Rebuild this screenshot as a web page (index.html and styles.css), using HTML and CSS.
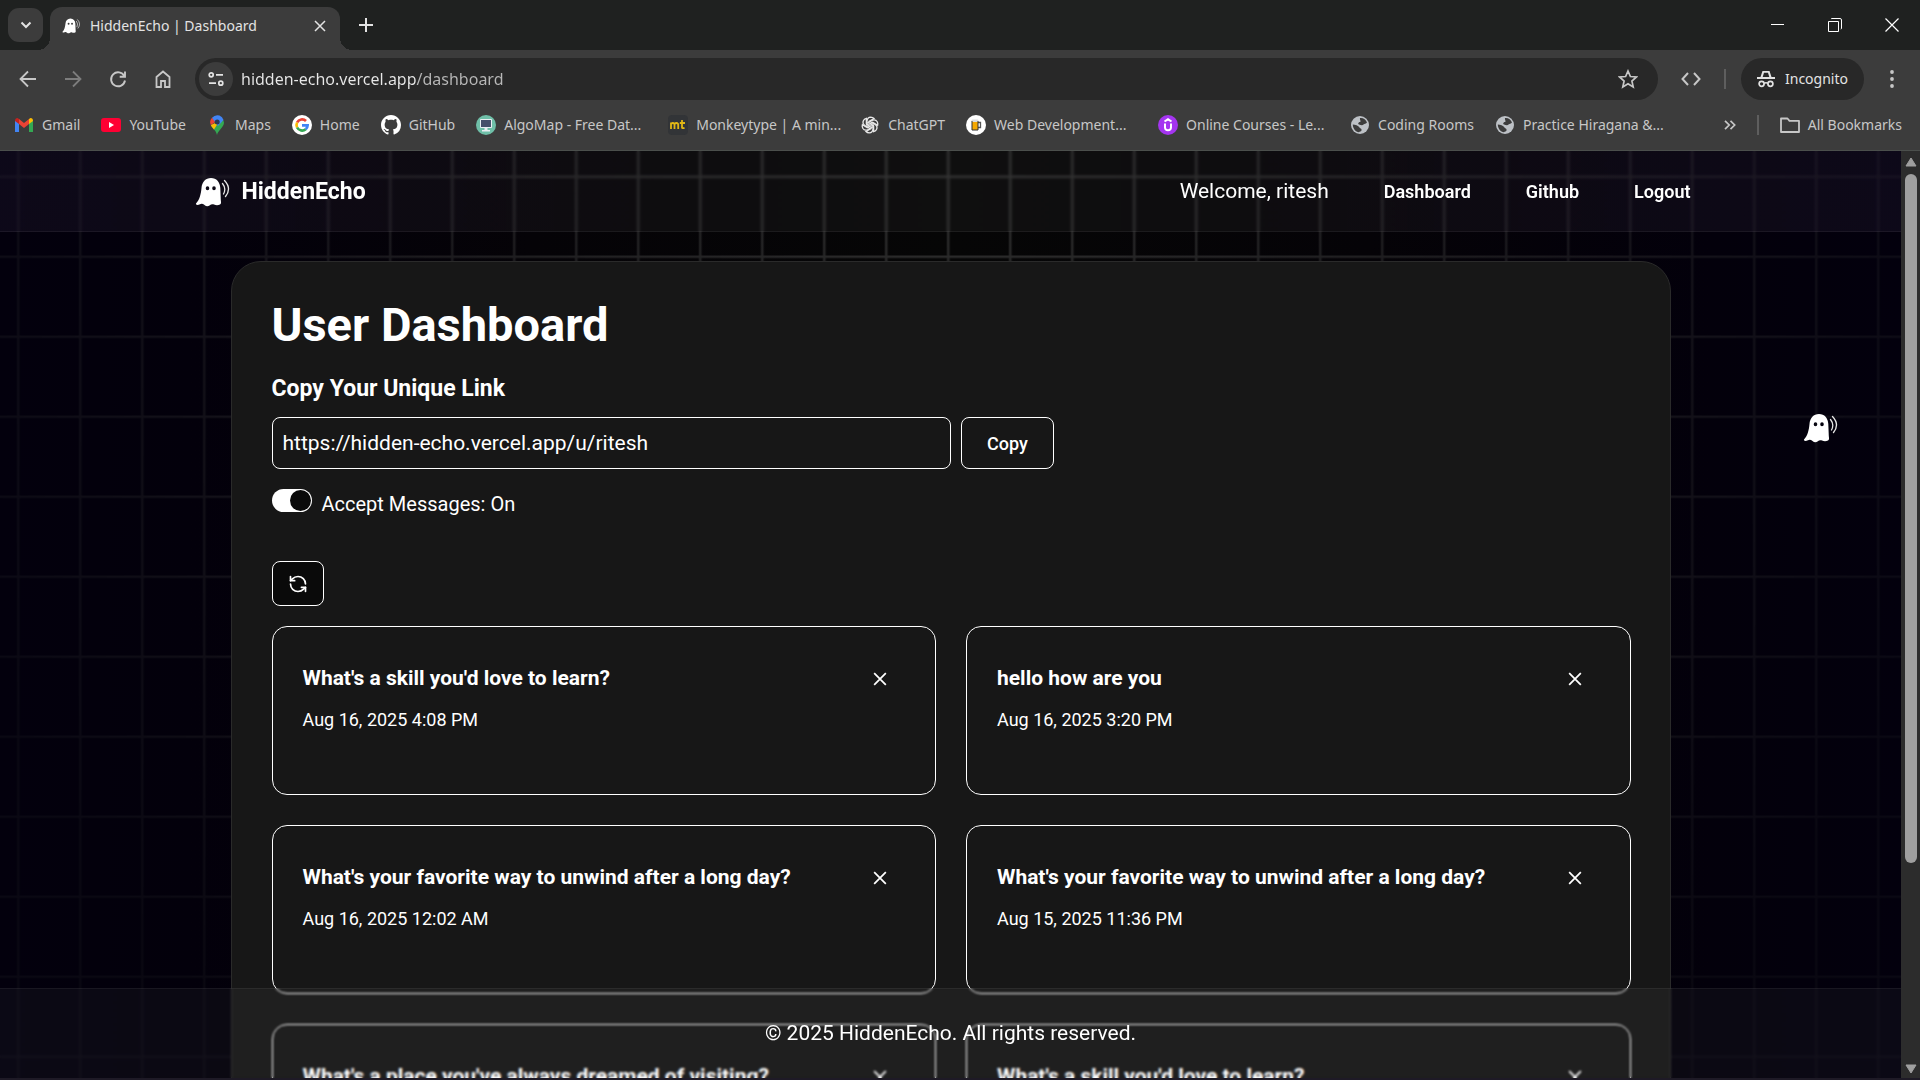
FILE: index.html
```html
<!DOCTYPE html>
<html lang="en">
<head>
<meta charset="utf-8">
<meta name="viewport" content="width=device-width, initial-scale=1">
<title>HiddenEcho | Dashboard</title>
<link rel="stylesheet" href="styles.css">
</head>
<body>
<svg class="defs" aria-hidden="true">
  <symbol id="ghost" viewBox="4 6 36 31">
    <path fill="#fff" fill-rule="evenodd" d="M20 8C14.500 8 11 12 10.500 18C10 24 8.500 30 5 33.500C4.500 35 6.500 35.500 9 34.300C10.500 33.300 12 33.800 13.500 35C15 36.500 17 36.800 18.500 35.500C20 34.300 21.500 33.800 23 34.600C25 35.600 27 35.600 29 34.600C30.500 33.800 30 32 29.800 30L29.300 18C29 12 25.500 8 20 8ZM16.500 16.200A1.800 2 0 1 1 16.500 20.200A1.800 2 0 1 1 16.500 16.200ZM23 16.200A1.800 2 0 1 1 23 20.200A1.800 2 0 1 1 23 16.200Z"/>
    <path fill="none" stroke="#e6e6e6" stroke-width="1.300" stroke-linecap="round" d="M31.500 13.500Q35.500 18.500 32.500 24M33.500 10.500Q41 18.500 34.500 26.500"/>
  </symbol>
  <symbol id="cross" viewBox="0 0 12 12"><path d="M1 1L11 11M11 1L1 11" fill="none" stroke="currentColor" stroke-width="1.500"/></symbol>
  <symbol id="globe" viewBox="0 0 20 20">
    <circle cx="10" cy="10" r="9" fill="#bdc1c6"/>
    <path fill="#3c3c3c" d="M10 3C13 2.500 16 4.500 17 7.500C16 9 14.500 8.500 13.500 9.500C12.500 11 10.500 10 9 9.500C7.500 9 8.500 7 10 7C11.500 6.500 9.500 4.500 10 3ZM2.800 9.500C5 9.500 8.500 10.500 9.500 12.500C10.500 14 12 13.500 11.500 15.500C11 17 9.500 16 9 17.200C5.500 16.800 2.800 13.500 2.800 9.500Z"/>
  </symbol>
</svg>

<div class="tabstrip">
  <button class="tab-search" aria-label="Search tabs"><svg width="12" height="8" viewBox="0 0 12 8"><path d="M1.500 1.500L6 6L10.500 1.500" fill="none" stroke="currentColor" stroke-width="2"/></svg></button>
  <div class="tab">
    <svg class="tab-icon" width="19" height="17"><use href="#ghost"/></svg>
    <span class="tab-title">HiddenEcho | Dashboard</span>
    <button class="tab-close" aria-label="Close tab"><svg width="12" height="12"><use href="#cross"/></svg></button>
  </div>
  <button class="new-tab" aria-label="New tab"><svg width="14" height="14" viewBox="0 0 14 14"><path d="M7 0V14M0 7H14" stroke="currentColor" stroke-width="2"/></svg></button>
  <div class="window-controls">
    <button aria-label="Minimize"><svg width="14" height="14" viewBox="0 0 14 14"><path d="M0 6.500H13" stroke="#fff"/></svg></button>
    <button aria-label="Restore"><svg width="14" height="14" viewBox="0 0 14 14"><path d="M.5 3.500H10.500V13.500H.5ZM3 1Q3.200 .5 4 .5H12Q13.500 .5 13.500 2V10Q13.500 11 12.800 11.200" fill="none" stroke="#fff"/></svg></button>
    <button aria-label="Close window"><svg width="14" height="14" viewBox="0 0 14 14"><path d="M.5 .5L13.500 13.500M13.500 .5L.5 13.500" stroke="#fff" stroke-width="1.200"/></svg></button>
  </div>
</div>

<div class="toolbar">
  <div class="nav-buttons">
    <button aria-label="Back"><svg width="20" height="20" viewBox="0 0 20 20"><path d="M18 10H3M10 2.500L2.500 10L10 17.500" fill="none" stroke="currentColor" stroke-width="1.800"/></svg></button>
    <button class="dim" aria-label="Forward"><svg width="20" height="20" viewBox="0 0 20 20"><path d="M2 10H17M10 2.500L17.500 10L10 17.500" fill="none" stroke="currentColor" stroke-width="1.800"/></svg></button>
    <button aria-label="Reload"><svg width="20" height="20" viewBox="0 0 20 20"><path d="M16.300 7A7 7 0 1 0 17 11.500M17 2.500V7.800H11.700" fill="none" stroke="currentColor" stroke-width="1.900"/></svg></button>
    <button aria-label="Home"><svg width="20" height="20" viewBox="0 0 20 20"><path d="M3.500 18V8L10 2.500L16.500 8V18H12V12H8V18Z" fill="none" stroke="currentColor" stroke-width="1.800"/></svg></button>
  </div>
  <div class="omnibox">
    <button class="site-info" aria-label="Site information"><svg width="16" height="16" viewBox="0 0 16 16"><g fill="none" stroke="currentColor" stroke-width="1.700"><circle cx="3.200" cy="3.800" r="2"/><path d="M8 3.800H15M1 12.200H8"/><circle cx="12.800" cy="12.200" r="2"/></g></svg></button>
    <input class="address" type="text" aria-label="Address" value="hidden-echo.vercel.app/dashboard">
    <button class="star" aria-label="Bookmark this tab"><svg width="20" height="20" viewBox="0 0 20 20"><path d="M10 2L12.400 7.500L18.400 8L13.900 12L15.200 17.900L10 14.800L4.800 17.900L6.100 12L1.600 8L7.600 7.500Z" fill="none" stroke="currentColor" stroke-width="1.700"/></svg></button>
  </div>
  <button class="code" aria-label="Developer extension"><svg width="20" height="14" viewBox="0 0 20 14"><path d="M7 1L1.500 7L7 13M13 1L18.500 7L13 13" fill="none" stroke="currentColor" stroke-width="2"/></svg></button>
  <span class="rule"></span>
  <button class="incognito"><svg width="18" height="18" viewBox="0 0 18 18"><path fill="currentColor" fill-rule="evenodd" d="M5.500 1H12.500L14.500 7H18V9H0V7H3.500ZM7 2.800L5.700 7H12.300L11 2.800Z"/><g fill="none" stroke="currentColor" stroke-width="1.700"><circle cx="4.600" cy="13.800" r="2.500"/><circle cx="13.400" cy="13.800" r="2.500"/><path d="M7 13.300Q9 12.200 11 13.300"/></g></svg>Incognito</button>
  <button class="menu" aria-label="Menu"><svg width="4" height="18" viewBox="0 0 4 18"><g fill="currentColor"><circle cx="2" cy="2" r="1.900"/><circle cx="2" cy="9" r="1.900"/><circle cx="2" cy="16" r="1.900"/></g></svg></button>
</div>

<nav class="bookmarks" aria-label="Bookmarks">
  <a href="#"><svg viewBox="0 0 20 20"><path fill="#4285f4" d="M1 5V17H5V8Z"/><path fill="#34a853" d="M19 5V17H15V8Z"/><path fill="#ea4335" d="M5 4L10 8L15 4V9L10 13L5 9Z"/><path fill="#c5221f" d="M1 6Q1 3 3.500 3L5 4V9L1 6Z"/><path fill="#fbbc04" d="M19 6Q19 3 16.500 3L15 4V9L19 6Z"/></svg>Gmail</a>
  <a href="#"><svg viewBox="0 0 20 20"><rect y="3" width="20" height="14" rx="3" fill="#f03"/><path fill="#fff" d="M8 7L13 10L8 13Z"/></svg>YouTube</a>
  <a href="#"><svg viewBox="0 0 20 20"><path fill="#34a853" d="M4 10C5 13.500 9 15 10 20C11 15.500 17 12 17 7.500L16 4.500Z"/><path fill="#fbbc04" d="M3.800 10L12 6.500L7 14.500Q4.500 12 3.800 10Z"/><path fill="#ea4335" d="M5 2.700L9.500 6.500L3.800 10Q2 6 5 2.700Z"/><path fill="#4285f4" d="M5 2.700Q8 -.7 12.500 .5Q15.500 1.800 16.500 5L11 11Z"/><circle cx="10.200" cy="7" r="2.500" fill="#2b3a55"/></svg>Maps</a>
  <a href="#"><svg viewBox="0 0 20 20"><circle cx="10" cy="10" r="10" fill="#fff"/><g fill="none" stroke-width="2.700"><path stroke="#ea4335" d="M5.100 7.500A5.600 5.600 0 0 1 14 6"/><path stroke="#fbbc04" d="M5.100 12.500A5.600 5.600 0 0 1 5.100 7.500"/><path stroke="#34a853" d="M13.700 14.200A5.600 5.600 0 0 1 5.100 12.500"/><path stroke="#4285f4" d="M10 10.300H15.600A5.600 5.600 0 0 1 13.700 14.200"/></g></svg>Home</a>
  <a href="#"><svg viewBox="0 0 16 16"><path fill="#fff" d="M8 0C3.580 0 0 3.580 0 8c0 3.540 2.290 6.530 5.470 7.590.4.070.55-.17.55-.38 0-.19-.01-.82-.01-1.490-2.010.37-2.530-.49-2.690-.94-.09-.23-.48-.94-.82-1.130-.28-.15-.68-.52-.01-.53.63-.01 1.080.58 1.230.82.72 1.210 1.870.87 2.330.66.07-.52.28-.87.51-1.070-1.780-.2-3.640-.89-3.640-3.950 0-.87.31-1.590.82-2.150-.08-.2-.36-1.020.08-2.120 0 0 .67-.21 2.200.82.640-.18 1.320-.27 2-.27s1.360.09 2 .27c1.530-1.040 2.200-.82 2.200-.82.44 1.100.16 1.920.08 2.120.51.56.82 1.270.82 2.150 0 3.070-1.870 3.750-3.650 3.950.29.25.54.73.54 1.480 0 1.070-.01 1.930-.01 2.200 0 .21.15.46.55.38A8.010 8.010 0 0 0 16 8c0-4.420-3.580-8-8-8z"/></svg>GitHub</a>
  <a class="long" href="#"><svg viewBox="0 0 20 20"><circle cx="10" cy="10" r="10" fill="#6fbfa8"/><rect x="4" y="4" width="12" height="9" rx="1" fill="#e8eef2"/><rect x="5" y="5" width="10" height="7" fill="#46506b"/><path fill="#e8eef2" d="M8.500 13H11.500V15H14V16.500H6V15H8.500Z"/></svg>AlgoMap - Free Dat...</a>
  <a class="long" href="#"><svg viewBox="0 0 20 20"><rect width="20" height="20" rx="4" fill="#323437"/><path fill="none" stroke="#e2b714" stroke-width="1.800" d="M3 14V7.500M3 9Q4.800 7 6.500 9V14M6.500 9Q8.500 7 10.200 9V14M14 5V12.500Q14.200 13.500 16.500 13M11.800 8H17"/></svg>Monkeytype | A min...</a>
  <a href="#"><svg viewBox="0 0 20 20"><g fill="none" stroke="#e8e8e8" stroke-width="1.300"><path id="petal" d="M7 11.800V6.200Q7.200 2.200 10.800 2.100Q12.800 2.200 14 3.500L9 6.400V10"/><use href="#petal" transform="rotate(60 10 10)"/><use href="#petal" transform="rotate(120 10 10)"/><use href="#petal" transform="rotate(180 10 10)"/><use href="#petal" transform="rotate(240 10 10)"/><use href="#petal" transform="rotate(300 10 10)"/></g></svg>ChatGPT</a>
  <a class="long" href="#"><svg viewBox="0 0 20 20"><circle cx="10" cy="10" r="10" fill="#fff"/><path d="M12 7.500H14.500V12.500H12" fill="none" stroke="#555" stroke-width="1.300"/><rect x="6" y="5.500" width="6" height="9.500" fill="#f5a800"/><rect x="5.500" y="4.500" width="7" height="2.500" rx="1" fill="#ddd"/><path d="M6 15H12M6 6V15M12 6V15" stroke="#333"/></svg>Web Development...</a>
  <a class="long" href="#"><svg viewBox="0 0 20 20"><circle cx="10" cy="10" r="10" fill="#a435f0"/><path d="M6.500 6.500L10 4.300L13.500 6.500M7 8.500V12.500Q7.200 15.300 10 15.300T13 12.500V8.500" fill="none" stroke="#fff" stroke-width="2"/></svg>Online Courses - Le...</a>
  <a href="#"><svg><use href="#globe"/></svg>Coding Rooms</a>
  <a class="long" href="#"><svg><use href="#globe"/></svg>Practice Hiragana &amp;...</a>
  <button class="overflow" aria-label="More bookmarks"><svg viewBox="0 0 12 10" width="12" height="10"><path d="M1 .8L5.200 5L1 9.200M6.500 .8L10.700 5L6.500 9.200" fill="none" stroke="currentColor" stroke-width="1.700"/></svg></button>
  <span class="rule"></span>
  <a class="all" href="#"><svg viewBox="0 0 20 20"><path d="M1 3.500H7.500L9.500 5.800H19V17H1Z" fill="none" stroke="currentColor" stroke-width="1.800" stroke-linejoin="round"/></svg>All Bookmarks</a>
</nav>

<div class="viewport">
  <div class="page">
    <div class="backdrop"></div>
    <header class="site-header">
      <div class="header-inner">
        <a class="brand" href="#"><svg width="36" height="31"><use href="#ghost"/></svg>HiddenEcho</a>
        <nav class="site-nav">
          <span class="welcome">Welcome, ritesh</span>
          <a href="#">Dashboard</a>
          <a href="#">Github</a>
          <a href="#">Logout</a>
        </nav>
      </div>
    </header>

    <main class="panel">
      <h1>User Dashboard</h1>
      <h2><label for="link">Copy Your Unique Link</label></h2>
      <div class="copy-row">
        <input id="link" type="text" value="https://hidden-echo.vercel.app/u/ritesh" readonly>
        <button class="copy">Copy</button>
      </div>
      <div class="accept">
        <input id="accept" class="switch" type="checkbox" checked>
        <label for="accept">Accept Messages: On</label>
      </div>
      <button class="refresh" aria-label="Refresh messages"><svg width="20" height="20" viewBox="0 0 24 24"><g fill="none" stroke="currentColor" stroke-width="2" stroke-linecap="round" stroke-linejoin="round"><path d="M21 12a9 9 0 0 0-9-9 9.750 9.750 0 0 0-6.740 2.740L3 8"/><path d="M3 3v5h5"/><path d="M3 12a9 9 0 0 0 9 9 9.750 9.750 0 0 0 6.740-2.740L21 16"/><path d="M16 16h5v5"/></g></svg></button>
      <div class="messages">
        <article class="message"><div><h3>What's a skill you'd love to learn?</h3><time>Aug 16, 2025 4:08 PM</time></div><button aria-label="Delete message"><svg width="14" height="14"><use href="#cross"/></svg></button></article>
        <article class="message"><div><h3>hello how are you</h3><time>Aug 16, 2025 3:20 PM</time></div><button aria-label="Delete message"><svg width="14" height="14"><use href="#cross"/></svg></button></article>
        <article class="message"><div><h3>What's your favorite way to unwind after a long day?</h3><time>Aug 16, 2025 12:02 AM</time></div><button aria-label="Delete message"><svg width="14" height="14"><use href="#cross"/></svg></button></article>
        <article class="message"><div><h3>What's your favorite way to unwind after a long day?</h3><time>Aug 15, 2025 11:36 PM</time></div><button aria-label="Delete message"><svg width="14" height="14"><use href="#cross"/></svg></button></article>
        <article class="message"><div><h3>What's a place you've always dreamed of visiting?</h3></div><button aria-label="Delete message"><svg width="14" height="14"><use href="#cross"/></svg></button></article>
        <article class="message"><div><h3>What's a skill you'd love to learn?</h3></div><button aria-label="Delete message"><svg width="14" height="14"><use href="#cross"/></svg></button></article>
      </div>
    </main>

    <svg class="floating-ghost" width="36" height="31"><use href="#ghost"/></svg>
    <footer class="site-footer">© 2025 HiddenEcho. All rights reserved.</footer>
  </div>
  <div class="scrollbar">
    <svg width="12" height="10" viewBox="0 0 12 10"><path d="M6 1L11 9H1Z" fill="#9f9f9f" stroke="#9f9f9f" stroke-linejoin="round"/></svg>
    <div class="scroll-track"><div class="scroll-thumb"></div></div>
    <svg width="12" height="10" viewBox="0 0 12 10"><path d="M6 9L11 1H1Z" fill="#9f9f9f" stroke="#9f9f9f" stroke-linejoin="round"/></svg>
  </div>
</div>
</body>
</html>
```
FILE: styles.css
```css
* { box-sizing: border-box; }

body {
  margin: 0;
  height: 100vh;
  display: flex;
  flex-direction: column;
  overflow: hidden;
  background: #1e1a26;
  color: #fff;
  font-family: Roboto, "Liberation Sans", sans-serif;
}

button {
  padding: 0;
  border: 0;
  background: none;
  color: inherit;
  font: inherit;
  display: flex;
  align-items: center;
  justify-content: center;
}

input { font: inherit; color: inherit; }
a { color: inherit; text-decoration: none; }
h1, h2, h3 { margin: 0; }
.defs { position: absolute; width: 0; height: 0; }

/* Browser frame */
.tabstrip, .toolbar, .bookmarks {
  font-family: "Noto Sans", "Open Sans", sans-serif;
  font-size: 14px;
  flex: none;
}

.tabstrip {
  height: 50px;
  display: flex;
  align-items: flex-end;
  padding-left: 8px;
  background: #1f2120;
  color: #e3e3e3;
}
.tab-search {
  width: 35px;
  height: 34px;
  margin-bottom: 8px;
  border-radius: 11px;
  background: #3c3c3c;
}
.tab {
  position: relative;
  width: 290px;
  height: 43px;
  margin-left: 7px;
  padding: 0 12px 6px;
  display: flex;
  align-items: center;
  gap: 9px;
  background: #3c3c3c;
  border-radius: 12px 12px 0 0;
}
.tab::before, .tab::after {
  content: "";
  position: absolute;
  bottom: 0;
  width: 12px;
  height: 12px;
}
.tab::before { left: -12px; background: radial-gradient(circle at 0 0, transparent 12px, #3c3c3c 12px); }
.tab::after { right: -12px; background: radial-gradient(circle at 100% 0, transparent 12px, #3c3c3c 12px); }
.tab-icon { flex: none; }
.tab-title { flex: 1; line-height: 34px; }
.tab-close { width: 16px; height: 20px; }
.new-tab { width: 34px; height: 34px; margin: 0 0 8px 9px; }
.window-controls { display: flex; margin-left: auto; }
.window-controls button { width: 57px; height: 50px; }

.toolbar {
  display: flex;
  align-items: center;
  height: 57px;
  padding-left: 6px;
  background: #3c3c3c;
  color: #c7c7c7;
}
.nav-buttons { display: flex; gap: 1px; margin-right: 10px; }
.nav-buttons button { width: 44px; height: 42px; }
.nav-buttons .dim { color: #7d7d7d; }
.omnibox {
  flex: 1;
  height: 42px;
  display: flex;
  align-items: center;
  padding: 0 20px 0 4px;
  border-radius: 21px;
  background: #282828;
}
.site-info { width: 34px; height: 34px; border-radius: 50%; background: #3c3c3c; color: #e3e3e3; }
.address {
  flex: 1;
  min-width: 0;
  height: 30px;
  margin-left: 8px;
  padding: 0;
  border: 0;
  outline: 0;
  font-size: 16px;
  background: linear-gradient(90deg, #e8e8e8 176px, #b8b8b8 176px) text;
  -webkit-text-fill-color: transparent;
}
.code { width: 66px; height: 42px; }
.rule { width: 2px; height: 20px; background: #5e5e5e; }
.incognito {
  height: 42px;
  margin-left: 15px;
  padding: 0 16px;
  gap: 10px;
  border-radius: 21px;
  background: #282828;
  color: #e3e3e3;
}
.menu { width: 56px; height: 42px; }

.bookmarks {
  display: flex;
  align-items: center;
  gap: 21px;
  height: 44px;
  padding: 0 18px 8px 14px;
  background: #3c3c3c;
  border-bottom: 1px solid #4b4f4c;
  color: #c7c7c7;
  white-space: nowrap;
}
.bookmarks a { display: flex; align-items: center; gap: 8px; }
.bookmarks a svg { width: 20px; height: 20px; flex: none; }
.bookmarks .long { width: 171px; }
.bookmarks .overflow { margin-left: auto; }

/* Page area */
.viewport { flex: 1; min-height: 0; display: flex; margin-bottom: 2px; }
.page {
  position: relative;
  flex: 1;
  min-width: 0;
  overflow: hidden;
  background: linear-gradient(90deg, #03000d 0%, #03000b 10%, #050307 28%, #060606 50%, #050307 72%, #03000b 90%, #03000d 100%);
}
.backdrop {
  position: absolute;
  inset: 0;
  background:
    linear-gradient(90deg, transparent 27px, #424242 28px, #424242 29px, transparent 31px) 50% 0 / 62px 80px,
    linear-gradient(transparent 24px, #424242 25px, #424242 26px, transparent 28px) 50% 0 / 62px 80px;
  mask-image: radial-gradient(ellipse 56% 130% at 50% 0, rgba(0, 0, 0, .65) 0%, rgba(0, 0, 0, .42) 45%, rgba(0, 0, 0, .25) 75%, rgba(0, 0, 0, .12) 100%);
}
.site-header, .site-footer {
  position: absolute;
  left: 0;
  right: 0;
  z-index: 2;
  background: rgba(255, 255, 255, .035);
  backdrop-filter: blur(1px);
}
.site-header {
  top: 0;
  border-bottom: 1px solid rgba(255, 255, 255, .06);
  background: linear-gradient(90deg, rgba(220, 170, 255, .05), rgba(255, 255, 255, .04) 35%, rgba(255, 255, 255, .04) 65%, rgba(220, 170, 255, .05));
}
.header-inner {
  display: flex;
  align-items: center;
  justify-content: space-between;
  max-width: 1512px;
  height: 80px;
  margin: 0 auto;
  padding-right: 16px;
}
.brand { display: flex; align-items: center; gap: 11px; font-size: 23px; font-weight: 700; }
.site-nav { display: flex; align-items: center; gap: 55px; font-size: 18px; font-weight: 600; }
.welcome { font-size: 21px; font-weight: 400; }
.site-footer {
  bottom: 0;
  height: 90px;
  border-top: 1px solid rgba(255, 255, 255, .06);
  text-align: center;
  font-size: 21px;
  line-height: 88px;
}

.panel {
  position: relative;
  max-width: 1440px;
  margin: 110px auto 0;
  padding: 39px 39px 39px 40px;
  border: 1px solid #2a2a2a;
  border-radius: 30px;
  background: #171717;
}
h1 { font-size: 47px; line-height: 48px; }
h2 { margin-top: 25px; font-size: 23px; line-height: 30px; }
.copy-row { display: flex; gap: 10px; margin-top: 13px; }
.copy-row input {
  width: 50%;
  height: 52px;
  padding: 0 10px;
  border: 1px solid #fff;
  border-radius: 8px;
  outline: 0;
  background: transparent;
  font-size: 21px;
}
.copy { padding: 0 25px; border: 1px solid #fff; border-radius: 8px; font-size: 18px; font-weight: 500; }
.accept { display: flex; align-items: flex-start; gap: 10px; margin-top: 20px; font-size: 20px; line-height: 30px; }
.switch {
  appearance: none;
  display: flex;
  width: 40px;
  height: 23px;
  margin: 0;
  padding: 1px;
  border-radius: 12px;
  background: #fff;
}
.switch::before { content: ""; width: 21px; height: 21px; margin-left: auto; border-radius: 50%; background: #0a0a0a; }
.refresh {
  width: 52px;
  height: 45px;
  margin-top: 42px;
  border: 1px solid #fff;
  border-radius: 8px;
  background: #0a0a0a;
}
.messages { display: grid; grid-template-columns: 1fr 1fr; gap: 30px; margin-top: 20px; }
.message {
  display: flex;
  justify-content: space-between;
  align-items: flex-start;
  min-height: 169px;
  padding: 36px 39px 30px 30px;
  border: 1px solid #fff;
  border-radius: 15px;
}
.message h3 { font-size: 21px; line-height: 30px; }
.message time { display: block; margin-top: 12px; font-size: 18px; line-height: 30px; }
.message button { width: 32px; height: 32px; }

.floating-ghost { position: absolute; right: 62px; top: 261px; }

.scrollbar {
  width: 19px;
  display: flex;
  flex-direction: column;
  align-items: center;
  justify-content: space-between;
  padding: 6px 0 4px;
  background: #2c2c2c;
}
.scroll-track { flex: 1; margin: 7px 0; }
.scroll-thumb { width: 12px; height: 78%; border-radius: 6px; background: #9f9f9f; }
```
